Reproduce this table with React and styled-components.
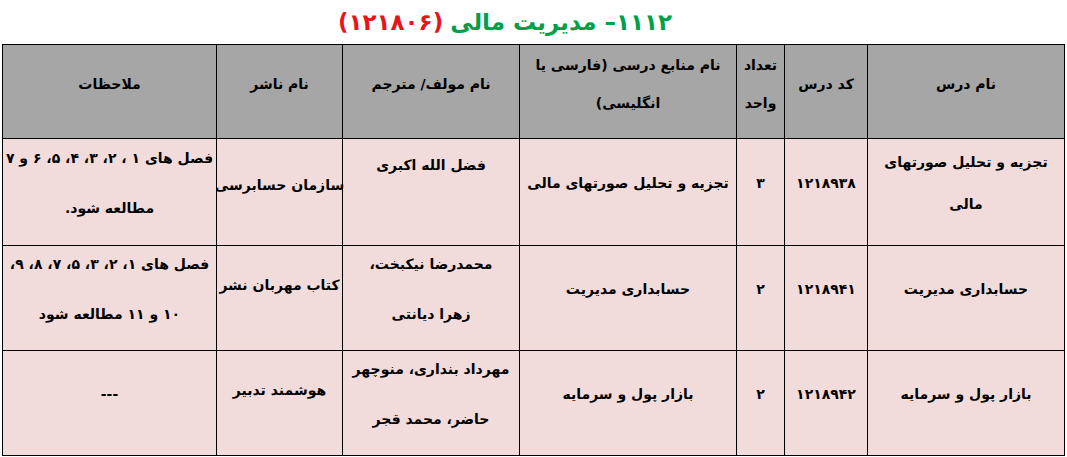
import React from 'react';
import styled, { createGlobalStyle } from 'styled-components';

const GlobalStyle = createGlobalStyle`
  html, body {
    margin: 0;
    padding: 0;
    background: #ffffff;
  }
  body {
    font-family: "DejaVu Sans", "Noto Sans", sans-serif;
    color: #000000;
  }
`;

const Page = styled.div`
  width: 1067px;
  height: 457px;
  overflow: hidden;
  direction: rtl;
`;

const Title = styled.div`
  height: 44px;
  display: flex;
  justify-content: center;
  align-items: center;
  gap: 7px;
  padding-right: 57px;
  box-sizing: border-box;
  font-size: 23px;
  font-weight: bold;
  white-space: nowrap;
`;

const TitleText = styled.span`
  color: ${p => p.$red ? '#e8141b' : '#00a04a'};
`;

const Table = styled.div`
  display: grid;
  grid-template-columns: 196px 82px 47px 216px 176px 125px 213px;
  grid-template-rows: 93px 106px 104px 104px;
  gap: 1px;
  background: #000000;
  border: 1px solid #000000;
  width: max-content;
  margin-right: 2px;
`;

const Cell = styled.div`
  display: flex;
  flex-direction: column;
  justify-content: center;
  align-items: center;
  text-align: center;
  box-sizing: border-box;
  padding-bottom: ${p => p.$pb}px;
  background: ${p => p.$head ? '#a6a6a6' : '#f2dcdb'};
  font-size: 14px;
  font-weight: bold;
  line-height: ${p => p.$lh}px;
  letter-spacing: ${p => p.$code ? '1px' : 'normal'};
`;

const Line = styled.span`
  display: block;
  white-space: nowrap;
`;

const header = [
  { lines: ['نام درس'] },
  { lines: ['کد درس'] },
  { lines: ['تعداد', 'واحد'] },
  { lines: ['نام منابع درسی (فارسی یا', 'انگلیسی)'] },
  { lines: ['نام مولف/ مترجم'] },
  { lines: ['نام ناشر'] },
  { lines: ['ملاحظات'] },
];

const rows = [
  [
    { lines: ['تجزیه و تحلیل صورتهای', 'مالی'], lh: 42 },
    { lines: ['۱۲۱۸۹۳۸'], code: true },
    { lines: ['۳'] },
    { lines: ['تجزیه و تحلیل صورتهای مالی'] },
    { lines: ['فضل الله اکبری', '\u00a0'], lh: 36 },
    { lines: ['سازمان حسابرسی'], pb: 14 },
    { lines: ['فصل های ۱ ، ۲، ۳، ۴، ۵، ۶ و ۷', 'مطالعه شود.'] },
  ],
  [
    { lines: ['حسابداری مدیریت'] },
    { lines: ['۱۲۱۸۹۴۱'], code: true },
    { lines: ['۲'] },
    { lines: ['حسابداری مدیریت'] },
    { lines: ['محمدرضا نیکبخت،', 'زهرا دیانتی'] },
    { lines: ['کتاب مهربان نشر'], pb: 26 },
    { lines: ['فصل های ۱، ۲، ۳، ۵، ۷، ۸، ۹،', '۱۰ و ۱۱ مطالعه شود'] },
  ],
  [
    { lines: ['بازار پول و سرمایه'] },
    { lines: ['۱۲۱۸۹۴۲'], code: true },
    { lines: ['۲'] },
    { lines: ['بازار پول و سرمایه'] },
    { lines: ['مهرداد بنداری، منوچهر', 'حاضر، محمد قجر'] },
    { lines: ['هوشمند تدبیر'], pb: 26 },
    { lines: ['---'] },
  ],
];

const TableCell = ({ cell, head }) => (
  <Cell
    $head={head}
    $code={cell.code}
    $lh={cell.lh || (head ? 38 : 50)}
    $pb={cell.pb !== undefined ? cell.pb : (head ? 16 : 18)}
  >
    {cell.lines.map((l, i) => <Line key={i}>{l}</Line>)}
  </Cell>
);

export default function App() {
  return (
    <Page>
      <GlobalStyle />
      <Title>
        <TitleText>۱۱۱۲– مدیریت مالی</TitleText>
        <TitleText $red>(۱۲۱۸۰۶)</TitleText>
      </Title>
      <Table>
        {header.map((c, i) => <TableCell key={`h${i}`} cell={c} head />)}
        {rows.map((r, ri) =>
          r.map((c, ci) => <TableCell key={`r${ri}_${ci}`} cell={c} />)
        )}
      </Table>
    </Page>
  );
}
